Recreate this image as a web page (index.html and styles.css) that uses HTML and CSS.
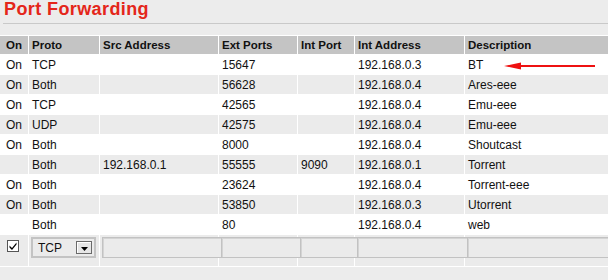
FILE: index.html
```html
<!DOCTYPE html>
<html lang="en">
<head>
  <meta charset="UTF-8">
  <title>Port Forwarding</title>
  <link rel="stylesheet" href="styles.css">
</head>
<body>
  <h1 class="title">Port Forwarding</h1>

  <table class="fwd">
    <colgroup>
      <col class="c-on">
      <col class="c-proto">
      <col class="c-src">
      <col class="c-ext">
      <col class="c-int">
      <col class="c-addr">
      <col>
    </colgroup>
    <thead>
      <tr>
        <th class="on">On</th>
        <th>Proto</th>
        <th>Src Address</th>
        <th>Ext Ports</th>
        <th>Int Port</th>
        <th>Int Address</th>
        <th>Description</th>
      </tr>
    </thead>
    <tbody>
      <tr>
        <td class="on">On</td><td>TCP</td><td></td><td>15647</td><td></td><td>192.168.0.3</td>
        <td>BT<svg class="arrow" width="91" height="8" viewBox="0 0 91 8"><polygon points="0,4 17,0.6 17,7.4" fill="#ee1111"/><rect x="16" y="3" width="75" height="2" fill="#ee1111"/></svg></td>
      </tr>
      <tr class="alt">
        <td class="on">On</td><td>Both</td><td></td><td>56628</td><td></td><td>192.168.0.4</td><td>Ares-eee</td>
      </tr>
      <tr>
        <td class="on">On</td><td>TCP</td><td></td><td>42565</td><td></td><td>192.168.0.4</td><td>Emu-eee</td>
      </tr>
      <tr class="alt">
        <td class="on">On</td><td>UDP</td><td></td><td>42575</td><td></td><td>192.168.0.4</td><td>Emu-eee</td>
      </tr>
      <tr>
        <td class="on">On</td><td>Both</td><td></td><td>8000</td><td></td><td>192.168.0.4</td><td>Shoutcast</td>
      </tr>
      <tr class="alt">
        <td class="on"></td><td>Both</td><td>192.168.0.1</td><td>55555</td><td>9090</td><td>192.168.0.1</td><td>Torrent</td>
      </tr>
      <tr>
        <td class="on">On</td><td>Both</td><td></td><td>23624</td><td></td><td>192.168.0.4</td><td>Torrent-eee</td>
      </tr>
      <tr class="alt">
        <td class="on">On</td><td>Both</td><td></td><td>53850</td><td></td><td>192.168.0.3</td><td>Utorrent</td>
      </tr>
      <tr>
        <td class="on"></td><td>Both</td><td></td><td>80</td><td></td><td>192.168.0.4</td><td>web</td>
      </tr>
    </tbody>
    <tfoot>
      <tr>
        <td class="on"><span class="check"><svg width="10" height="10" viewBox="0 0 10 10"><path d="M1.5 4.5 L4 7 L8.5 1.5 L8.5 3.5 L4 9 L1.5 6.5 Z" fill="#000"/></svg></span></td>
        <td><span class="select">TCP<span class="drop"><svg width="7" height="4" viewBox="0 0 7 4"><polygon points="0,0 7,0 3.5,4" fill="#000"/></svg></span></span></td>
        <td><span class="field"></span></td>
        <td><span class="field"></span></td>
        <td><span class="field"></span></td>
        <td><span class="field"></span></td>
        <td><span class="field"></span></td>
      </tr>
    </tfoot>
  </table>
</body>
</html>
```

FILE: styles.css
```css
body {
  margin: 0;
  overflow: hidden;
  background: #ececec;
  font-family: "Liberation Sans", Arial, sans-serif;
  font-size: 12px;
  color: #111;
}
.title {
  margin: 0 0 0 3px;
  padding: 0 0 4px 1px;
  border-bottom: 1px solid #c9c9c9;
  font-size: 18px;
  line-height: 19px;
  letter-spacing: 0.4px;
  color: #e4261a;
}
.fwd {
  margin: 11px 0 0 -1px;
  width: 611px;
  table-layout: fixed;
  border-collapse: separate;
  border-spacing: 1px;
  background: #fff;
}
.c-on { width: 28px; }
.c-proto { width: 70px; }
.c-src { width: 118px; }
.c-ext { width: 78px; }
.c-int { width: 56px; }
.c-addr { width: 109px; }

.fwd th,
.fwd td {
  padding: 0 3px;
  text-align: left;
  white-space: nowrap;
  line-height: 14px;
}
.fwd th {
  height: 18px;
  font-size: 11.5px;
  background: #c4c4c4;
}
.fwd td {
  height: 19px;
}
.fwd .on {
  padding: 0;
  text-align: center;
}
.fwd tr.alt td {
  background: #ebebeb;
}
.arrow {
  margin-left: 21px;
  vertical-align: -1px;
}

/* new rule row */
.fwd tfoot td {
  height: 26px;
  padding: 2px 0 0 2px;
  vertical-align: top;
  background: #ebebeb;
  line-height: 0;
}
.fwd tfoot td.on {
  padding: 5px 0 0 7px;
  text-align: left;
}
.check {
  display: block;
  box-sizing: border-box;
  width: 12px;
  height: 12px;
  border: 1px solid #555;
  background: #fff;
}
.select {
  display: flex;
  align-items: center;
  box-sizing: border-box;
  width: 65px;
  height: 21px;
  border: 2px solid #c3c3c3;
  padding-left: 5px;
  font-size: 12px;
  line-height: 14px;
}
.drop {
  display: flex;
  align-items: flex-end;
  justify-content: center;
  box-sizing: border-box;
  width: 16px;
  height: 13px;
  margin-left: auto;
  margin-right: 2px;
  padding-bottom: 2px;
  border: 1px solid #6a6a6a;
  background: #e6e6e6;
  box-shadow: inset 1px 1px 0 #fff;
}
/* inline-block so a field can run over the gap into the next cell */
.field {
  display: inline-block;
  vertical-align: top;
  box-sizing: border-box;
  width: calc(100% + 4px);
  height: 21px;
  border: 1px solid #c2c2c2;
  box-shadow: inset 1px 1px 0 #d4d4d4;
  background: #ebebeb;
}
```
